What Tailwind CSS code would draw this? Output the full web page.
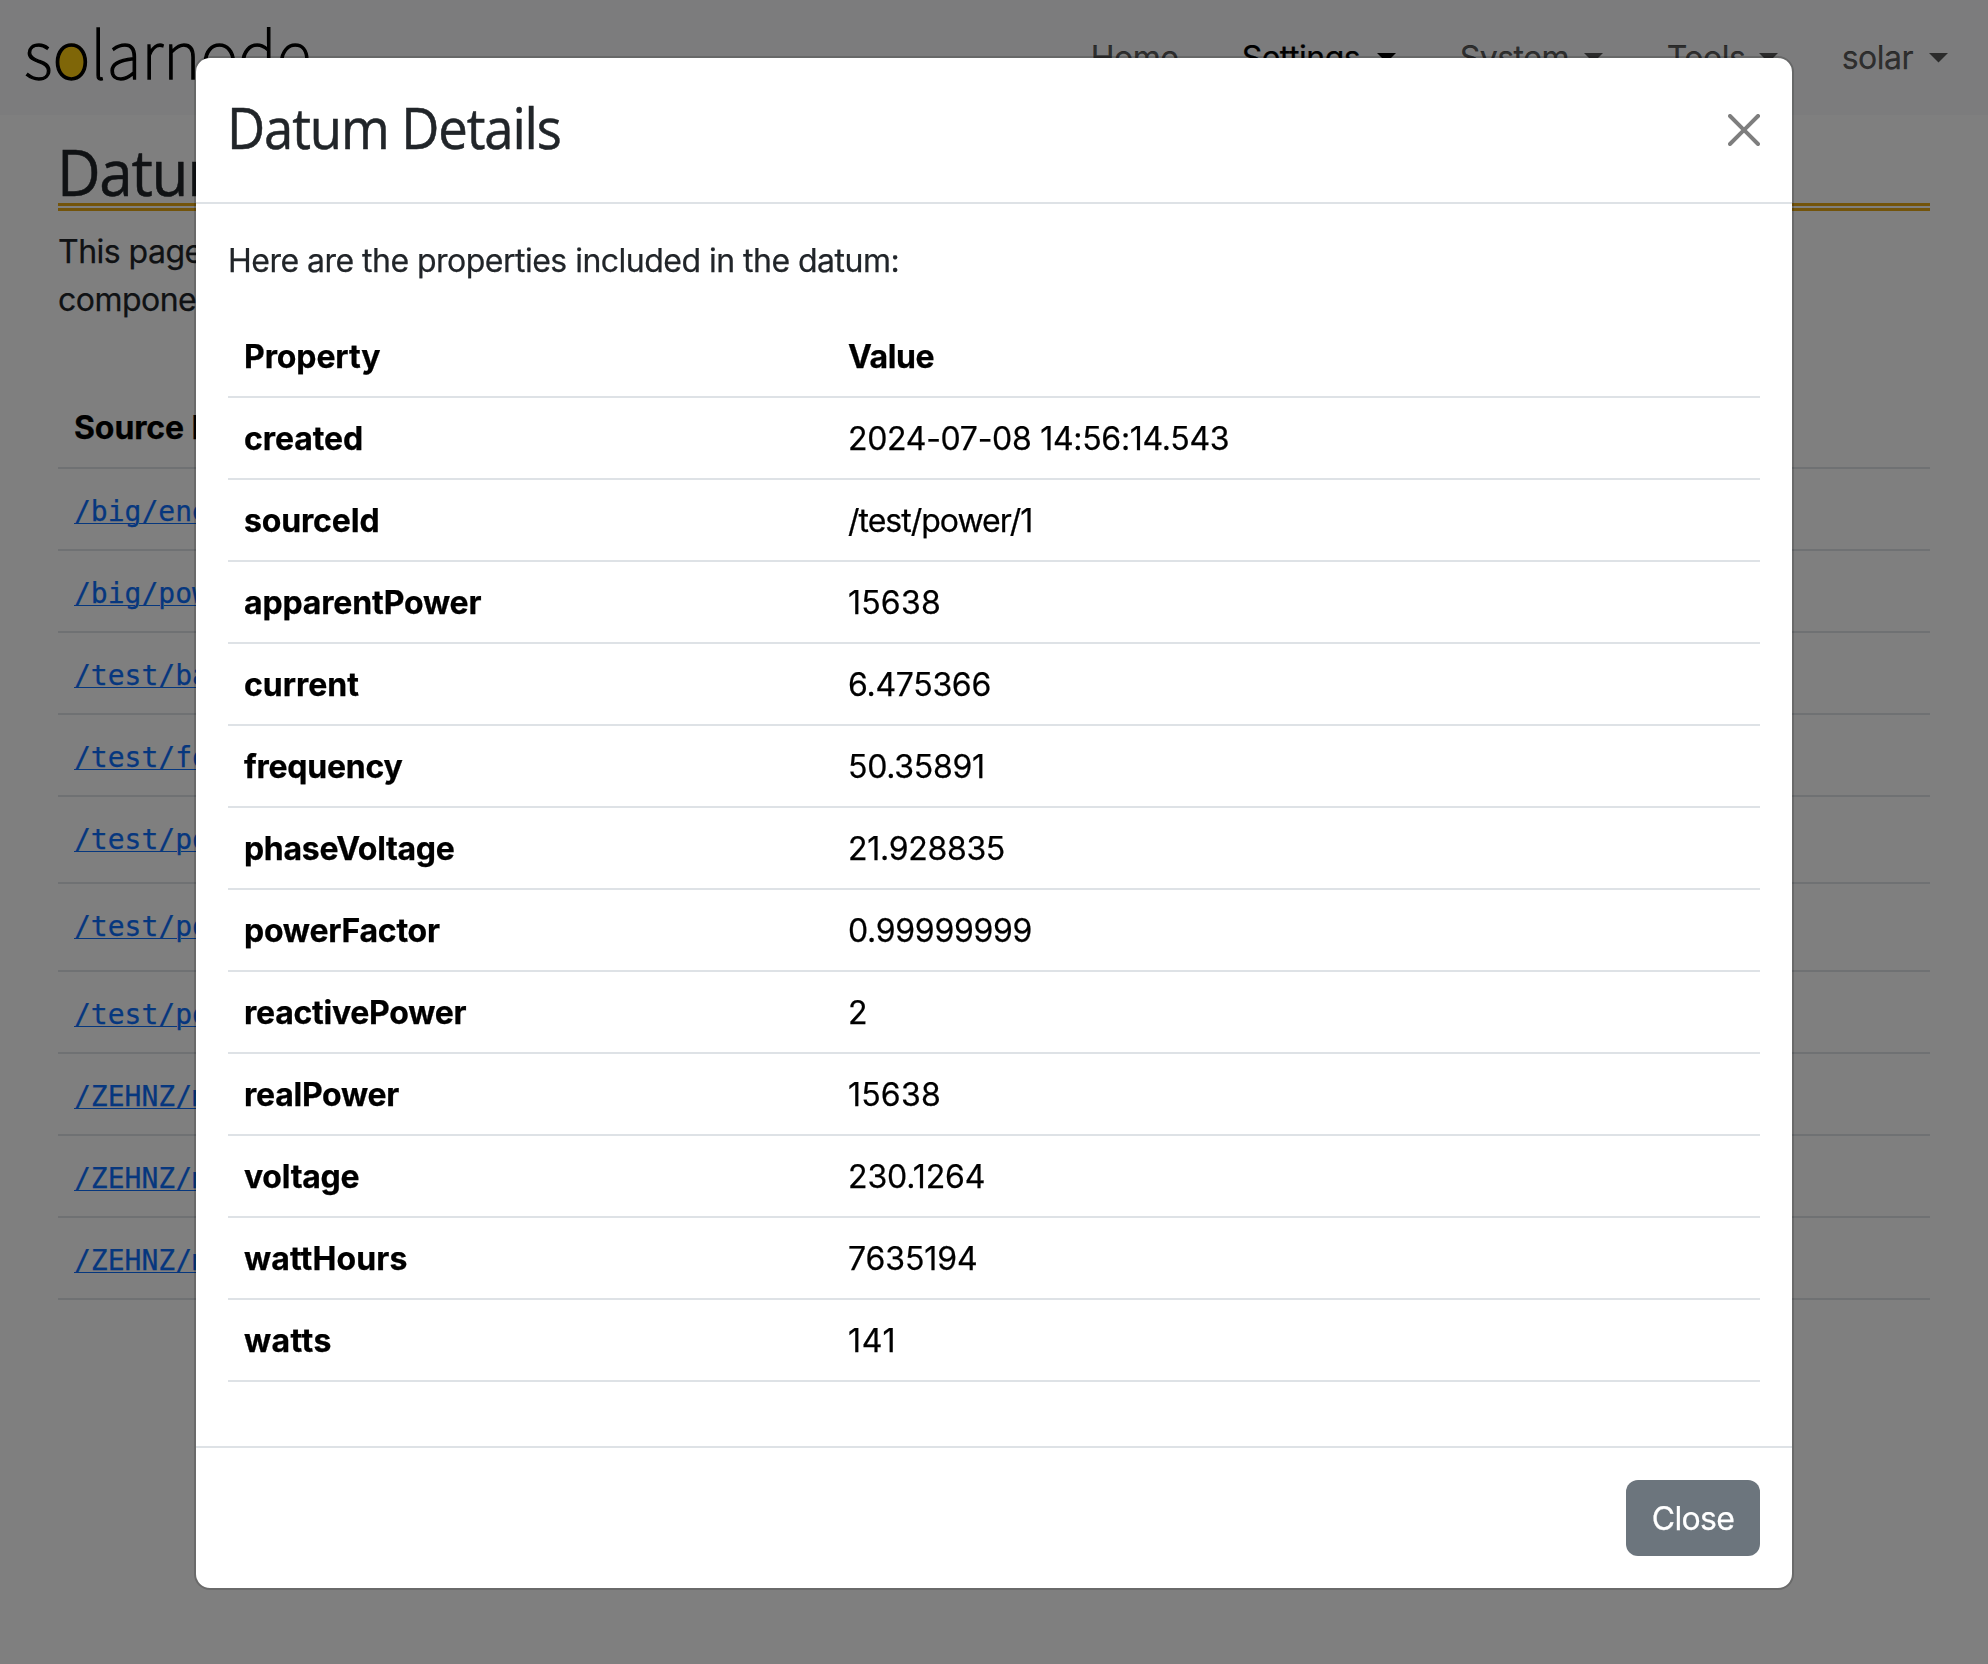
<!DOCTYPE html>
<html lang="en">
<head>
<meta charset="utf-8">
<title>SolarNode</title>
<script src="https://cdn.jsdelivr.net/npm/@tailwindcss/browser@4"></script>
</head>
<body class="h-[1664px] overflow-hidden bg-white font-['Inter',sans-serif] text-[32px] leading-[48px] text-[#212529] [-webkit-text-stroke:0.25px]">

<!-- Page -->
<header class="isolate flex h-[115px] items-center justify-between bg-[#f8f9fa] pr-10 pl-6">
  <div class="mb-3 font-['Noto_Sans_CJK_SC',sans-serif] text-[64.5px] leading-none font-thin text-black [-webkit-text-stroke:1.3px_black]">s<span class="relative">o<svg class="absolute top-[39px] left-[5px] -z-10" width="30" height="36" viewBox="0 0 30 36"><ellipse cx="15" cy="18" rx="14.500" ry="17.500" fill="#fc1"/></svg></span>larnode</div>
  <nav class="flex items-center tracking-[-0.5px] text-black/65">
    <a class="w-[151px]">Home</a>
    <a class="flex w-[218px] items-center gap-[17px] text-black">Settings<svg width="19" height="10" viewBox="0 0 19 10"><path d="M0 0h19L9.500 9.600z" fill="currentColor"/></svg></a>
    <a class="flex w-[207px] items-center gap-[15px]">System<svg width="19" height="10" viewBox="0 0 19 10"><path d="M0 0h19L9.500 9.600z" fill="currentColor"/></svg></a>
    <a class="flex w-[175px] items-center gap-3.5">Tools<svg width="19" height="10" viewBox="0 0 19 10"><path d="M0 0h19L9.500 9.600z" fill="currentColor"/></svg></a>
    <a class="flex items-center gap-4">solar<svg width="19" height="10" viewBox="0 0 19 10"><path d="M0 0h19L9.500 9.600z" fill="currentColor"/></svg></a>
  </nav>
</header>
<main class="px-[58px] pt-6">
  <h1 class="h-[72px] border-b-8 border-double border-[#e6a817] font-['Open_Sans',sans-serif] text-[64px] leading-[66px] tracking-[-1.4px]"><span class="-ml-px inline-block origin-left scale-x-[.94] [-webkit-text-stroke:0.5px]">Datum</span></h1>
  <p class="mt-[17px] w-[160px] tracking-[-0.52px]">This page component</p>
  <table class="mt-[63px] w-full border-separate border-spacing-0 text-left text-black [&_td]:border-b-2 [&_td]:border-[#dee2e6] [&_th]:border-b-2 [&_th]:border-[#dee2e6]">
    <thead><tr class="h-[82px]"><th class="px-4 pt-0.5 font-bold tracking-[-0.1px]">Source ID</th></tr></thead>
    <tbody class="align-top font-['DejaVu_Sans_Mono',monospace] text-[28px] text-[#0d6efd] underline decoration-1 underline-offset-2">
      <tr class="h-[82px]"><td class="px-4 pt-[19px]"><a>/big/ene</a></td></tr>
      <tr class="h-[82px]"><td class="px-4 pt-[19px]"><a>/big/pow</a></td></tr>
      <tr class="h-[82px]"><td class="px-4 pt-[19px]"><a>/test/ba</a></td></tr>
      <tr class="h-[82px]"><td class="px-4 pt-[19px]"><a>/test/fo</a></td></tr>
      <tr class="h-[87px]"><td class="px-4 pt-[19px]"><a>/test/po</a></td></tr>
      <tr class="h-[88px]"><td class="px-4 pt-[19px]"><a>/test/po</a></td></tr>
      <tr class="h-[82px]"><td class="px-4 pt-[19px]"><a>/test/po</a></td></tr>
      <tr class="h-[82px]"><td class="px-4 pt-[19px]"><a>/ZEHNZ/m</a></td></tr>
      <tr class="h-[82px]"><td class="px-4 pt-[19px]"><a>/ZEHNZ/m</a></td></tr>
      <tr class="h-[82px]"><td class="px-4 pt-[19px]"><a>/ZEHNZ/m</a></td></tr>
    </tbody>
  </table>
</main>

<!-- Modal -->
<div class="fixed inset-0 flex items-start justify-center bg-black/50 pt-14">
  <section class="w-[1600px] rounded-2xl border-2 border-black/17 bg-white bg-clip-padding">
    <div class="flex h-[146px] items-center justify-between border-b-2 border-[#dee2e6] px-8">
      <h2 class="-ml-px origin-left scale-x-[.94] pb-[7px] font-['Open_Sans',sans-serif] text-[56px] leading-[72px] tracking-[-1.2px] [-webkit-text-stroke:0.5px]">Datum Details</h2>
      <svg class="opacity-50" width="32" height="32" viewBox="0 0 16 16" fill="#000"><path d="M.293.293a1 1 0 0 1 1.414 0L8 6.586 14.293.293a1 1 0 1 1 1.414 1.414L9.414 8l6.293 6.293a1 1 0 0 1-1.414 1.414L8 9.414l-6.293 6.293a1 1 0 0 1-1.414-1.414L6.586 8 .293 1.707a1 1 0 0 1 0-1.414z"/></svg>
    </div>
    <div class="p-8 pt-[33px]">
      <p class="mb-[31px] tracking-[-0.52px]">Here are the properties included in the datum:</p>
      <table class="mb-8 w-full table-fixed border-separate border-spacing-0 text-left tracking-[-0.3px] text-black [&_td]:border-b-2 [&_td]:border-[#dee2e6] [&_td]:pt-0.5 [&_th]:border-b-2 [&_th]:border-[#dee2e6] [&_th]:pt-0.5">
        <thead>
          <tr class="h-[82px]"><th class="w-[604px] px-4 font-bold tracking-[-0.1px]">Property</th><th class="px-4 font-bold tracking-[-0.4px]">Value</th></tr>
        </thead>
        <tbody>
          <tr class="h-[82px]"><th class="px-4 font-bold tracking-[-0.1px]">created</th><td class="px-4">2024-07-08 14:56:14.543</td></tr>
          <tr class="h-[82px]"><th class="px-4 font-bold tracking-[-0.15px]">sourceId</th><td class="px-4 tracking-[-1px]">/test/power/1</td></tr>
          <tr class="h-[82px]"><th class="px-4 font-bold tracking-[-0.15px]">apparentPower</th><td class="px-4 tracking-[0.2px]">15638</td></tr>
          <tr class="h-[82px]"><th class="px-4 font-bold tracking-normal">current</th><td class="px-4">6.475366</td></tr>
          <tr class="h-[82px]"><th class="px-4 font-bold tracking-[-0.25px]">frequency</th><td class="px-4">50.35891</td></tr>
          <tr class="h-[82px]"><th class="px-4 font-bold tracking-[-0.3px]">phaseVoltage</th><td class="px-4">21.928835</td></tr>
          <tr class="h-[82px]"><th class="px-4 font-bold tracking-[-0.25px]">powerFactor</th><td class="px-4">0.99999999</td></tr>
          <tr class="h-[82px]"><th class="px-4 font-bold tracking-[-0.25px]">reactivePower</th><td class="px-4">2</td></tr>
          <tr class="h-[82px]"><th class="px-4 font-bold tracking-[-0.25px]">realPower</th><td class="px-4 tracking-[0.2px]">15638</td></tr>
          <tr class="h-[82px]"><th class="px-4 font-bold tracking-[-0.25px]">voltage</th><td class="px-4 tracking-[-0.1px]">230.1264</td></tr>
          <tr class="h-[82px]"><th class="px-4 font-bold tracking-[0.1px]">wattHours</th><td class="px-4 tracking-[-0.1px]">7635194</td></tr>
          <tr class="h-[82px]"><th class="px-4 font-bold tracking-[0.4px]">watts</th><td class="px-4 tracking-[0.7px]">141</td></tr>
        </tbody>
      </table>
    </div>
    <div class="flex justify-end border-t-2 border-[#dee2e6] p-8">
      <button class="h-[76px] w-[134px] rounded-xl bg-[#6c757d] pt-0.5 tracking-[-0.7px] text-white">Close</button>
    </div>
  </section>
</div>
</body>
</html>
